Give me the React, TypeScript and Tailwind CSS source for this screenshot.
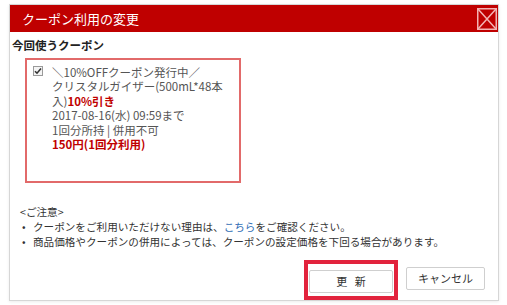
import React from 'react'

function CloseIcon() {
  return (
    <svg width="20" height="22" viewBox="0 0 20 22" fill="none">
      <rect x="0.75" y="0.75" width="18.5" height="20.5" stroke="#f3b3b3" strokeWidth="1.5" />
      <path d="M1 1 L19 21 M19 1 L1 21" stroke="#f3b3b3" strokeWidth="1.5" />
    </svg>
  )
}

function CheckBox() {
  return (
    <span className="w-[10px] h-[10px] mt-[1px] shrink-0 border border-[#9a9a9a] bg-[#f4f4f4] flex items-center justify-center">
      <svg width="8" height="8" viewBox="0 0 8 8">
        <path d="M1 4.2 L3 6.2 L7 1.6" stroke="#333" strokeWidth="1.6" fill="none" />
      </svg>
    </span>
  )
}

export default function App() {
  return (
    <div
      className="w-[507px] h-[305px] bg-white pt-[4px] pl-[9px] overflow-hidden"
      style={{ fontFamily: '"Noto Sans CJK JP", "Noto Sans", sans-serif' }}
    >
      <div className="w-[490px] h-[297px] border border-[#d6d6d6] bg-white flex flex-col shadow-[0_1px_3px_rgba(0,0,0,0.08)]">
        <div className="h-[27px] bg-[#bf0000] flex items-center justify-between pl-[12px] pr-[1px]">
          <h2 className="text-white text-[13px] leading-none">クーポン利用の変更</h2>
          <CloseIcon />
        </div>

        <div className="flex flex-col">
          <h3 className="mt-[5px] ml-[2px] text-[11.5px] leading-[16px] font-bold text-[#222]">今回使うクーポン</h3>

          <div className="mt-[5px] ml-[15px] w-[216px] h-[125px] border-2 border-[#e26a6a] flex gap-[9px] pl-[6px] pt-[5px]">
            <CheckBox />
            <div className="text-[11.5px] leading-[14.4px] text-[#555] whitespace-nowrap">
              <p className="h-[14.4px]">＼10%OFFクーポン発行中／</p>
              <p className="h-[14.4px]">クリスタルガイザー(500mL*48本</p>
              <p className="h-[14.4px]">入)<span className="inline-block text-[#bf0000] font-bold">10%引き</span></p>
              <p className="h-[14.4px]">2017-08-16(水) 09:59まで</p>
              <p className="h-[14.4px]">1回分所持 | 併用不可</p>
              <p className="h-[14.4px] text-[#bf0000] font-bold">150円(1回分利用)</p>
            </div>
          </div>

          <div className="mt-[21px] ml-[10px] text-[10.6px] leading-[15px] text-[#333]">
            <p>&lt;ご注意&gt;</p>
            <ul>
              <li className="flex">
                <span className="w-[13px] pl-[2px]">•</span>
                <span>クーポンをご利用いただけない理由は、<span className="inline-block text-[#2f6db5]">こちら</span>をご確認ください。</span>
              </li>
              <li className="flex">
                <span className="w-[13px] pl-[2px]">•</span>
                <span>商品価格やクーポンの併用によっては、クーポンの設定価格を下回る場合があります。</span>
              </li>
            </ul>
          </div>

          <div className="mt-[18px] pr-[13px] flex justify-end gap-[13px]">
            <div className="relative">
              <button className="w-[84px] h-[23px] bg-white border border-[#cfcfcf] rounded-[2px] text-[11px] text-[#333]">
                更&nbsp;&nbsp;&nbsp;新
              </button>
              <span className="absolute -left-[5px] -top-[7px] w-[94px] h-[40px] border-4 border-[#e2233d] pointer-events-none" />
            </div>
            <button className="w-[79px] h-[23px] bg-white border border-[#cfcfcf] rounded-[2px] text-[11px] text-[#333]">
              キャンセル
            </button>
          </div>
        </div>
      </div>
    </div>
  )
}
